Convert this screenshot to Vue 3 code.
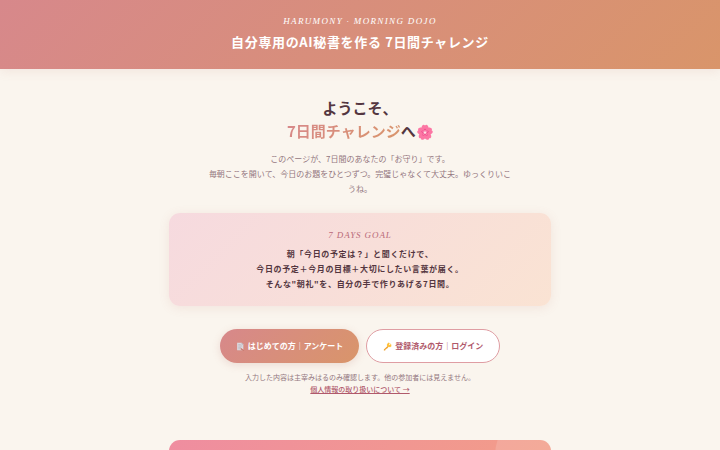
<script setup>
const goalLines = [
  '朝「今日の予定は？」と聞くだけで、',
  '今日の予定＋今月の目標＋大切にしたい言葉が届く。',
  'そんな"朝礼"を、自分の手で作りあげる7日間。'
]
</script>

<template>
  <div class="page">
    <header class="site-header">
      <p class="brand">HARUMONY · MORNING DOJO</p>
      <p class="site-title">自分専用のAI秘書を作る 7日間チャレンジ</p>
    </header>
    <main class="content">
      <section class="hero">
        <h1 class="headline">
          ようこそ、<br /><span class="accent">7日間チャレンジ</span>へ
          <svg class="blossom" viewBox="0 0 32 32" aria-hidden="true">
            <g v-for="n in 5" :key="n" :transform="`rotate(${(n - 1) * 72} 16 17)`">
              <path d="M16 18C11 15 7 9 10 4C12 1 14 1 16 3C18 1 20 1 22 4C25 9 21 15 16 18Z" fill="#fc77a4" />
            </g>
            <g v-for="n in 5" :key="'s' + n" :transform="`rotate(${(n - 1) * 72} 16 17)`">
              <path d="M16 17L13.5 12L16 9L18.5 12Z" fill="#f0488a" />
              <path d="M16 17V12" stroke="#ffd3dc" stroke-width="1.5" />
            </g>
            <circle cx="16" cy="17" r="2.2" fill="#ffe3e6" />
          </svg>
        </h1>
        <p class="lead">
          このページが、7日間のあなたの「お守り」です。<br />
          毎朝ここを開いて、今日のお題をひとつずつ。完璧じゃなくて大丈夫。ゆっくりいこうね。
        </p>
      </section>
      <section class="goal">
        <h2 class="goal-label">7 DAYS GOAL</h2>
        <p class="goal-text">
          <span v-for="line in goalLines" :key="line">{{ line }}</span>
        </p>
      </section>
      <nav class="actions">
        <a class="button primary" href="#survey">
          <svg class="icon" viewBox="0 0 32 32" aria-hidden="true">
            <path d="M4 3H20L26 9V29H4Z" fill="#dcd9de" />
            <path d="M20 3V9H26Z" fill="#aaa8b4" />
            <path d="M8 9H17M8 14H22M8 19H18M8 24H15" stroke="#b3adb8" stroke-width="2" />
            <path d="M17 20L29 29L26 32L16 26Z" fill="#c8776c" />
          </svg>
          はじめての方｜アンケート
        </a>
        <a class="button secondary" href="#login">
          <svg class="icon" viewBox="0 0 32 32" aria-hidden="true">
            <path d="M18 12L3 27V30H8V27H11V24H14L21 16Z" fill="#f0a22e" />
            <path d="M16 5L20 2L29 8L30 15L25 19L16 16L13 11Z" fill="#ffc13b" />
            <circle cx="24" cy="8" r="2.5" fill="#fff" />
          </svg>
          登録済みの方｜ログイン
        </a>
      </nav>
      <p class="note">
        入力した内容は主宰みはるのみ確認します。他の参加者には見えません。<br />
        <a class="privacy" href="#privacy">個人情報の取り扱いについて →</a>
      </p>
      <section class="banner"></section>
    </main>
  </div>
</template>

<style>
body {
  margin: 0;
  background: #faf5ee;
}
</style>

<style scoped>
.page {
  color: #543640;
  font-family: "Noto Sans CJK JP", sans-serif;
  font-size: 8px;
  text-align: center;
}

p,
h1,
h2 {
  margin: 0;
}

.site-header {
  padding: 16px 16px 16px;
  background: linear-gradient(135deg, #d7888b, #d9956a);
  box-shadow: 0 2px 11px rgba(180, 110, 100, 0.12);
  color: #fff;
}

.brand,
.goal-label {
  font-family: "Liberation Serif", serif;
  font-size: 9px;
  font-style: italic;
  font-weight: 400;
  line-height: 11px;
}

.brand {
  letter-spacing: 0.15em;
}

.site-title {
  margin-top: 4px;
  font-size: 13px;
  font-weight: 700;
  letter-spacing: 0.05em;
  line-height: 22px;
}

.content {
  max-width: 382px;
  margin: 0 auto;
  padding: 27px 16px;
}

.headline {
  font-size: 15px;
  font-weight: 700;
  line-height: 23px;
}

.accent {
  background: linear-gradient(135deg, #d7888b, #d9956a);
  background-clip: text;
  color: transparent;
}

.blossom {
  width: 16px;
  height: 16px;
  margin-left: -2px;
  vertical-align: -3px;
}

.lead {
  max-width: 310px;
  margin: 9px auto 0;
  color: #94777f;
  line-height: 15px;
}

.goal {
  margin-top: 17px;
  padding: 17px 16px 15px;
  border-radius: 11px;
  background: linear-gradient(135deg, #f6dadf, #fae3d3);
  box-shadow: 0 2px 11px rgba(180, 110, 100, 0.12);
}

.goal-label {
  color: #b96a79;
  letter-spacing: 0.1em;
}

.goal-text {
  margin-top: 5px;
  font-weight: 700;
  letter-spacing: 0.08em;
  line-height: 15px;
}

.goal-text span {
  display: block;
}

.actions {
  display: flex;
  flex-wrap: wrap;
  justify-content: center;
  gap: 7px;
  margin-top: 23px;
}

.button {
  display: flex;
  align-items: center;
  gap: 3px;
  box-sizing: border-box;
  height: 34px;
  padding: 0 15px;
  border: 1px solid transparent;
  border-radius: 17px;
  font-weight: 700;
  line-height: 10px;
  text-decoration: none;
}

.primary {
  background: linear-gradient(135deg, #d7888b, #d9956a) border-box;
  box-shadow: 0 2px 9px rgba(180, 110, 100, 0.2);
  color: #fff;
}

.secondary {
  padding: 0 16px;
  border-color: #df9da3;
  background: #fff;
  color: #b0596b;
}

.icon {
  width: 9px;
  height: 9px;
}

.note {
  margin-top: 8px;
  color: #94777f;
  font-size: 7px;
  line-height: 12px;
}

.privacy {
  color: #b0596b;
  font-weight: 500;
}

.banner {
  position: relative;
  overflow: hidden;
  height: 96px;
  margin-top: 45px;
  border-radius: 11px;
  background: linear-gradient(135deg, #ef8da0, #f3a083);
}

.banner::after {
  position: absolute;
  top: -30px;
  right: -34px;
  width: 90px;
  height: 90px;
  border-radius: 50%;
  background: rgba(255, 255, 255, 0.14);
  content: "";
}
</style>
